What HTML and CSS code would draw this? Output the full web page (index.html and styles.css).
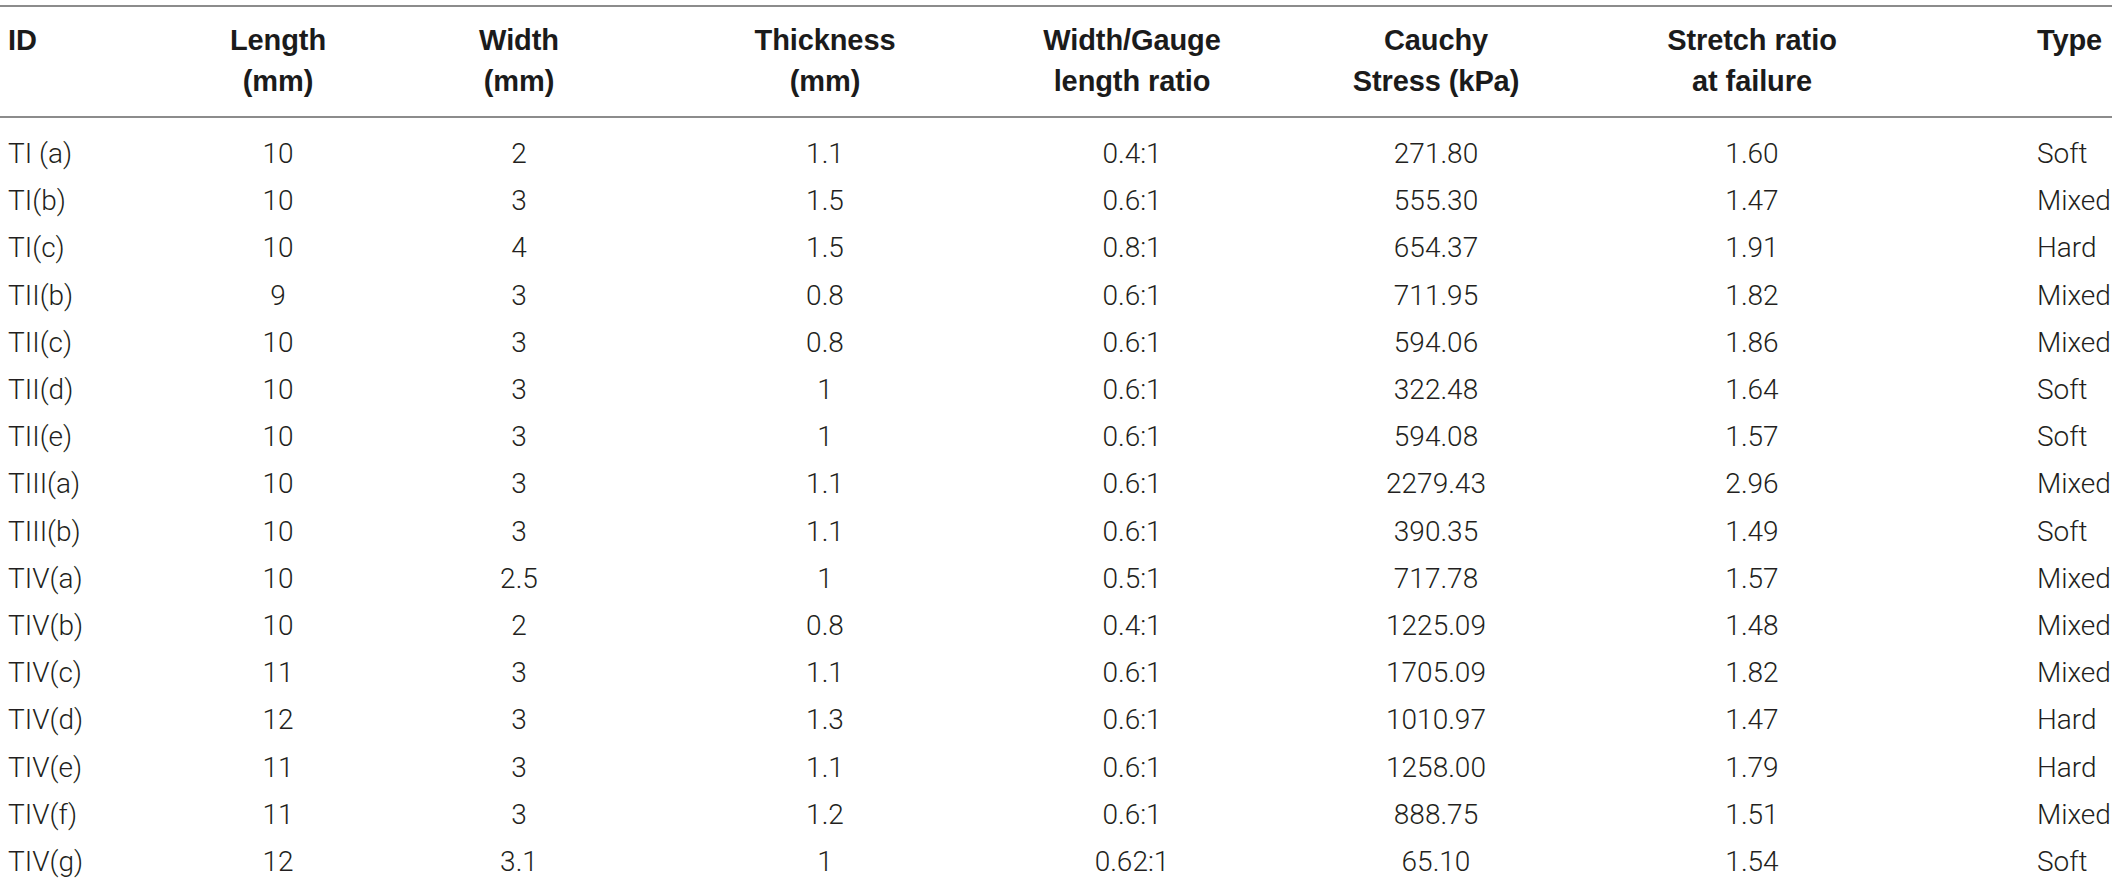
FILE: index.html
```html
<!DOCTYPE html>
<html>
<head>
<meta charset="utf-8">
<link rel="stylesheet" href="styles.css">
</head>
<body>
<div class="tbl">
  <div class="row head">
    <div class="c id">ID</div>
    <div class="c">Length<br>(mm)</div>
    <div class="c">Width<br>(mm)</div>
    <div class="c">Thickness<br>(mm)</div>
    <div class="c">Width/Gauge<br>length ratio</div>
    <div class="c">Cauchy<br>Stress (kPa)</div>
    <div class="c">Stretch ratio<br>at failure</div>
    <div class="c type">Type</div>
  </div>
  <div class="body">
    <div class="row"><div class="c id">TI (a)</div><div class="c">10</div><div class="c">2</div><div class="c">1.1</div><div class="c">0.4:1</div><div class="c">271.80</div><div class="c">1.60</div><div class="c type">Soft</div></div>
    <div class="row"><div class="c id">TI(b)</div><div class="c">10</div><div class="c">3</div><div class="c">1.5</div><div class="c">0.6:1</div><div class="c">555.30</div><div class="c">1.47</div><div class="c type">Mixed</div></div>
    <div class="row"><div class="c id">TI(c)</div><div class="c">10</div><div class="c">4</div><div class="c">1.5</div><div class="c">0.8:1</div><div class="c">654.37</div><div class="c">1.91</div><div class="c type">Hard</div></div>
    <div class="row"><div class="c id">TII(b)</div><div class="c">9</div><div class="c">3</div><div class="c">0.8</div><div class="c">0.6:1</div><div class="c">711.95</div><div class="c">1.82</div><div class="c type">Mixed</div></div>
    <div class="row"><div class="c id">TII(c)</div><div class="c">10</div><div class="c">3</div><div class="c">0.8</div><div class="c">0.6:1</div><div class="c">594.06</div><div class="c">1.86</div><div class="c type">Mixed</div></div>
    <div class="row"><div class="c id">TII(d)</div><div class="c">10</div><div class="c">3</div><div class="c">1</div><div class="c">0.6:1</div><div class="c">322.48</div><div class="c">1.64</div><div class="c type">Soft</div></div>
    <div class="row"><div class="c id">TII(e)</div><div class="c">10</div><div class="c">3</div><div class="c">1</div><div class="c">0.6:1</div><div class="c">594.08</div><div class="c">1.57</div><div class="c type">Soft</div></div>
    <div class="row"><div class="c id">TIII(a)</div><div class="c">10</div><div class="c">3</div><div class="c">1.1</div><div class="c">0.6:1</div><div class="c">2279.43</div><div class="c">2.96</div><div class="c type">Mixed</div></div>
    <div class="row"><div class="c id">TIII(b)</div><div class="c">10</div><div class="c">3</div><div class="c">1.1</div><div class="c">0.6:1</div><div class="c">390.35</div><div class="c">1.49</div><div class="c type">Soft</div></div>
    <div class="row"><div class="c id">TIV(a)</div><div class="c">10</div><div class="c">2.5</div><div class="c">1</div><div class="c">0.5:1</div><div class="c">717.78</div><div class="c">1.57</div><div class="c type">Mixed</div></div>
    <div class="row"><div class="c id">TIV(b)</div><div class="c">10</div><div class="c">2</div><div class="c">0.8</div><div class="c">0.4:1</div><div class="c">1225.09</div><div class="c">1.48</div><div class="c type">Mixed</div></div>
    <div class="row"><div class="c id">TIV(c)</div><div class="c">11</div><div class="c">3</div><div class="c">1.1</div><div class="c">0.6:1</div><div class="c">1705.09</div><div class="c">1.82</div><div class="c type">Mixed</div></div>
    <div class="row"><div class="c id">TIV(d)</div><div class="c">12</div><div class="c">3</div><div class="c">1.3</div><div class="c">0.6:1</div><div class="c">1010.97</div><div class="c">1.47</div><div class="c type">Hard</div></div>
    <div class="row"><div class="c id">TIV(e)</div><div class="c">11</div><div class="c">3</div><div class="c">1.1</div><div class="c">0.6:1</div><div class="c">1258.00</div><div class="c">1.79</div><div class="c type">Hard</div></div>
    <div class="row"><div class="c id">TIV(f)</div><div class="c">11</div><div class="c">3</div><div class="c">1.2</div><div class="c">0.6:1</div><div class="c">888.75</div><div class="c">1.51</div><div class="c type">Mixed</div></div>
    <div class="row"><div class="c id">TIV(g)</div><div class="c">12</div><div class="c">3.1</div><div class="c">1</div><div class="c">0.62:1</div><div class="c">65.10</div><div class="c">1.54</div><div class="c type">Soft</div></div>
  </div>
</div>
</body>
</html>
```
FILE: styles.css
```css
html, body {
  margin: 0;
  padding: 0;
  background: #ffffff;
}
.tbl {
  width: 2112px;
  margin-top: 5px;
  border-top: 2px solid #8c8c8c;
}
.row {
  display: grid;
  grid-template-columns: 160px 236px 246px 366px 248px 360px 272px 224px;
}
.head {
  border-bottom: 2px solid #8c8c8c;
  padding: 13px 0 14px;
  font-family: "Liberation Sans", Arial, sans-serif;
  font-weight: 700;
  font-size: 29px;
  line-height: 41px;
  letter-spacing: -0.1px;
  color: #1b1b1b;
}
.body {
  padding-top: 12px;
  font-family: Roboto, "Liberation Sans", Arial, sans-serif;
  font-weight: 300;
  font-size: 28px;
  color: #231f20;
}
.body .row {
  height: 47.2px;
  align-items: center;
}
.c {
  text-align: center;
}
.c.id {
  text-align: left;
  padding-left: 8px;
}
.c.type {
  text-align: left;
  padding-left: 149px;
}
```
